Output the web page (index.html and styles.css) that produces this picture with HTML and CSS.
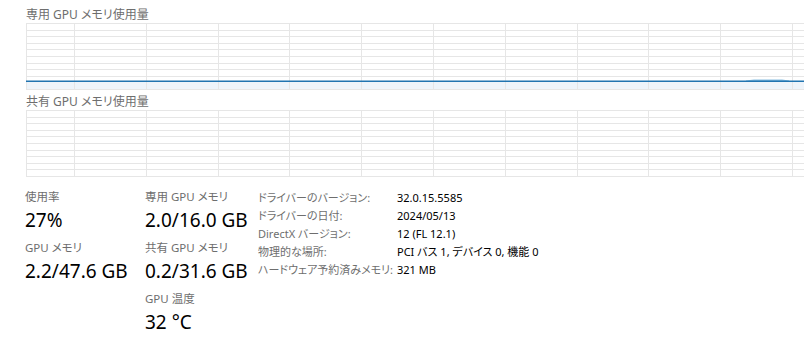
FILE: index.html
```html
<!DOCTYPE html>
<html lang="ja">
<head>
    <meta charset="UTF-8">
    <meta name="viewport" content="width=device-width, initial-scale=1.0">
    <title>GPU</title>
    <link rel="stylesheet" href="styles.css">
</head>
<body>

    <div class="graph-section">
        <div class="graph-title">専用 GPU メモリ使用量</div>
        <div class="graph">
            <svg width="780" height="67" viewBox="0 0 780 67">
                <path class="grid" d="M0 0.5H780M0 7.5H780M0 13.5H780M0 20.5H780M0 26.5H780M0 33.5H780M0 40.5H780M0 46.5H780M0 53.5H780M0 59.5H780M0 66.5H780"/>
                <rect class="usage-fill" x="0" y="59" width="780" height="7"/>
                <path class="grid" d="M0.5 0V67M48.5 0V67M120.5 0V67M192.5 0V67M263.5 0V67M335.5 0V67M407.5 0V67M479.5 0V67M551.5 0V67M622.5 0V67M694.5 0V67M766.5 0V67"/>
                <path class="usage-bump" d="M720 58.2L728 57.2H756L763 58.2"/>
                <path class="usage-line" d="M0 58.2H780"/>
            </svg>
        </div>
    </div>

    <div class="graph-section second">
        <div class="graph-title">共有 GPU メモリ使用量</div>
        <div class="graph">
            <svg width="780" height="67" viewBox="0 0 780 67">
                <path class="grid" d="M0 0.5H780M0 7.5H780M0 13.5H780M0 20.5H780M0 26.5H780M0 33.5H780M0 40.5H780M0 46.5H780M0 53.5H780M0 59.5H780M0 66.5H780"/>
                <path class="grid" d="M0.5 0V67M48.5 0V67M120.5 0V67M192.5 0V67M263.5 0V67M335.5 0V67M407.5 0V67M479.5 0V67M551.5 0V67M622.5 0V67M694.5 0V67M766.5 0V67"/>
            </svg>
        </div>
    </div>

    <div class="stats">
        <div class="stat-col first">
            <div class="stat">
                <div class="stat-label">使用率</div>
                <div class="stat-value">27%</div>
            </div>
            <div class="stat">
                <div class="stat-label">GPU メモリ</div>
                <div class="stat-value">2.2/47.6 GB</div>
            </div>
        </div>

        <div class="stat-col second">
            <div class="stat">
                <div class="stat-label">専用 GPU メモリ</div>
                <div class="stat-value">2.0/16.0 GB</div>
            </div>
            <div class="stat">
                <div class="stat-label">共有 GPU メモリ</div>
                <div class="stat-value">0.2/31.6 GB</div>
            </div>
            <div class="stat">
                <div class="stat-label">GPU 温度</div>
                <div class="stat-value">32 °C</div>
            </div>
        </div>

        <div class="details">
            <div class="detail-row">
                <span class="detail-label">ドライバーのバージョン:</span>
                <span class="detail-value">32.0.15.5585</span>
            </div>
            <div class="detail-row">
                <span class="detail-label">ドライバーの日付:</span>
                <span class="detail-value">2024/05/13</span>
            </div>
            <div class="detail-row">
                <span class="detail-label">DirectX バージョン:</span>
                <span class="detail-value">12 (FL 12.1)</span>
            </div>
            <div class="detail-row">
                <span class="detail-label">物理的な場所:</span>
                <span class="detail-value">PCI バス 1, デバイス 0, 機能 0</span>
            </div>
            <div class="detail-row">
                <span class="detail-label">ハードウェア予約済みメモリ:</span>
                <span class="detail-value">321 MB</span>
            </div>
        </div>
    </div>

</body>
</html>
```

FILE: styles.css
```css
body {
    margin: 0;
    padding-top: 8px;
    font-family: "Noto Sans", "Noto Sans CJK JP", sans-serif;
    font-feature-settings: "palt";
    background-color: #ffffff;
    color: #000000;
    overflow: hidden;
}

.graph-section {
    padding-left: 26px;
}

.graph-section.second {
    margin-top: 5px;
}

.graph-title {
    font-size: 12px;
    line-height: 14px;
    margin-bottom: 1px;
    color: #6e6e6e;
}

.graph {
    height: 67px;
    overflow: hidden;
}

.graph svg {
    display: block;
}

.grid {
    stroke: #e6e6e6;
    stroke-width: 1;
    fill: none;
}

.usage-fill {
    fill: #eef4fa;
}

.usage-line {
    stroke: #2174b0;
    stroke-width: 1.6;
    fill: none;
}

.usage-bump {
    stroke: #8cc0e2;
    stroke-width: 1.6;
    fill: none;
}

/* 아래 수치 영역 */
.stats {
    display: flex;
    margin-top: 13px;
    padding-left: 25px;
}

.stat-col.first {
    width: 120px;
}

.stat-col.second {
    width: 113px;
}

.stat {
    height: 51px;
}

.stat-label {
    font-size: 11.5px;
    height: 17px;
    line-height: 14px;
    color: #6e6e6e;
    white-space: nowrap;
}

.stat-value {
    font-size: 19px;
    height: 26px;
    line-height: 26px;
    color: #000000;
    white-space: nowrap;
}

.details {
    display: flex;
    flex-direction: column;
    margin-top: -1px;
    font-size: 11px;
}

.detail-row {
    display: flex;
    height: 18px;
    line-height: 17px;
    white-space: nowrap;
}

.detail-label {
    width: 139px;
    color: #6e6e6e;
}

.detail-value {
    color: #000000;
}
```
